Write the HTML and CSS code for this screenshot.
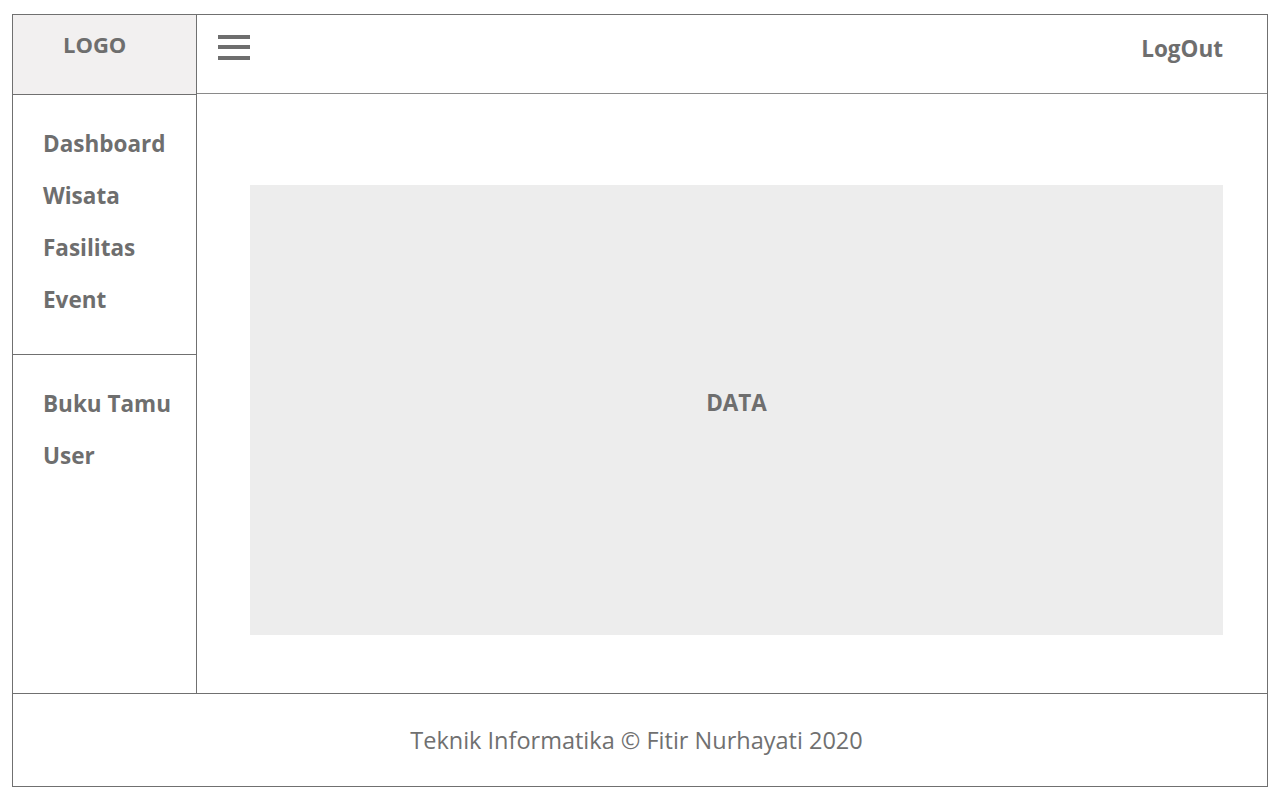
FILE: index.html
```html
<!DOCTYPE html>
<html lang="id">
<head>
<meta charset="utf-8">
<title>Admin</title>
<link rel="stylesheet" href="styles.css">
</head>
<body>
<div class="frame">
  <div class="logo">LOGO</div>
  <header class="topbar">
    <svg class="burger" width="32" height="26" viewBox="0 0 32 26" aria-hidden="true">
      <rect x="0" y="0" width="32" height="4" fill="#6e6e6e"/>
      <rect x="0" y="10" width="32" height="4" fill="#6e6e6e"/>
      <rect x="0" y="21" width="32" height="4" fill="#6e6e6e"/>
    </svg>
    <a class="logout" href="#">LogOut</a>
  </header>
  <aside class="sidebar">
    <nav class="menu menu-main">
      <a href="#">Dashboard</a>
      <a href="#">Wisata</a>
      <a href="#">Fasilitas</a>
      <a href="#">Event</a>
    </nav>
    <nav class="menu menu-extra">
      <a href="#">Buku Tamu</a>
      <a href="#">User</a>
    </nav>
  </aside>
  <main class="content">
    <div class="data">DATA</div>
  </main>
  <footer class="footer">Teknik Informatika © Fitir Nurhayati 2020</footer>
</div>
</body>
</html>
```
FILE: styles.css
```css
* { box-sizing: border-box; }
html, body { margin: 0; padding: 0; background: #fff; }
body {
  font-family: "Open Sans", "Noto Sans", sans-serif;
  color: #6e6e6e;
}
.frame {
  margin: 14px 0 0 12px;
  width: 1256px;
  height: 773px;
  border: 1px solid #707070;
  display: grid;
  grid-template-columns: 184px 1fr;
  grid-template-rows: 79px 599px 1fr;
}
.logo {
  background: #f2f0f0;
  border-right: 1px solid #707070;
  border-bottom: 1px solid #707070;
  font-weight: 700;
  font-size: 22px;
  padding: 14px 0 0 50px;
  line-height: 30px;
  height: 80px;
}
.topbar {
  border-bottom: 1px solid #8a8a8a;
  display: flex;
  align-items: flex-start;
  justify-content: space-between;
  padding: 20px 44px 0 21px;
}
.burger { display: block; }
.logout {
  color: #6e6e6e;
  text-decoration: none;
  font-weight: 700;
  font-size: 22.5px;
  line-height: 30px;
  margin-top: -1px;
}
.sidebar {
  border-right: 1px solid #707070;
  display: flex;
  flex-direction: column;
  margin-top: 1px;
}
.menu { display: flex; flex-direction: column; padding-left: 30px; }
.menu a {
  color: #6e6e6e;
  text-decoration: none;
  font-weight: 700;
  font-size: 22.5px;
  line-height: 52px;
}
.menu-main {
  height: 260px;
  padding-top: 23px;
  border-bottom: 1px solid #707070;
  margin-right: -1px;
}
.menu-extra { padding-top: 23px; }
.content {
  padding: 91px 44px 58px 53px;
}
.data {
  background: #ededed;
  height: 450px;
  display: flex;
  align-items: center;
  justify-content: center;
  font-weight: 700;
  font-size: 22.5px;
  padding-bottom: 16px;
}
.footer {
  grid-column: 1 / 3;
  border-top: 1px solid #707070;
  display: flex;
  align-items: center;
  justify-content: center;
  font-size: 23.5px;
  padding: 0 7px 0 0;
  color: #707070;
}
```
